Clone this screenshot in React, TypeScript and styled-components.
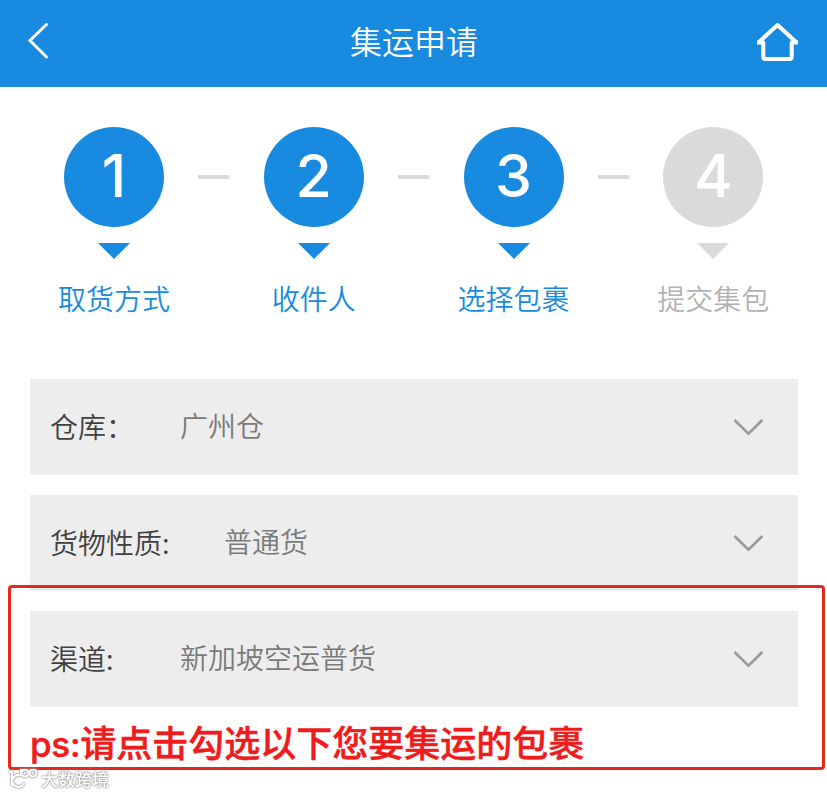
import { Fragment } from 'react';
import styled, { createGlobalStyle } from 'styled-components';

const color = {
  primary: '#188ae0',
  disabled: '#dadada',
  disabledText: '#b2b2b2',
  field: '#ededed',
  label: '#404040',
  value: '#7a7a7a',
  mark: '#e8281e',
  notice: '#ee1c1c',
};

const GlobalStyle = createGlobalStyle`
  * {
    box-sizing: border-box;
  }

  body {
    margin: 0;
    background: #fff;
    font-family: 'Noto Sans CJK SC', sans-serif;
  }
`;

const Page = styled.div`
  position: relative;
  width: 827px;
  height: 794px;
  overflow: hidden;
`;

const Header = styled.header`
  display: flex;
  align-items: center;
  justify-content: space-between;
  height: 87px;
  padding: 0 27px 5px 27px;
  background: ${color.primary};
`;

const HeaderSide = styled.div`
  display: flex;
  width: 44px;

  &:last-child {
    justify-content: flex-end;
  }
`;

const Title = styled.h1`
  margin: 0;
  padding: 0 0 2px 1px;
  color: #fff;
  font-size: 32px;
  font-weight: 350;
  line-height: 44px;
`;

const Steps = styled.div`
  display: flex;
  justify-content: space-between;
  padding: 40px 57.6px 0 58px;
`;

const Step = styled.div<{ $active: boolean }>`
  display: flex;
  flex-direction: column;
  align-items: center;
  width: 112px;
  color: ${({ $active }) => ($active ? color.primary : color.disabled)};
`;

const Circle = styled.div`
  width: 100px;
  height: 100px;
  border-radius: 50%;
  background: currentColor;
  text-align: center;

  > span {
    display: block;
    color: #fff;
    font-family: Inter, sans-serif;
    font-size: 59px;
    font-weight: 550;
    line-height: 98px;
  }
`;

const Arrow = styled.div`
  margin-top: 16px;
  border: 16px solid transparent;
  border-top-color: currentColor;
  border-bottom-width: 0;
`;

const StepLabel = styled.span<{ $active: boolean }>`
  margin-top: 19px;
  color: ${({ $active }) => ($active ? color.primary : color.disabledText)};
  font-size: 28px;
  font-weight: 350;
  line-height: 40px;
  white-space: nowrap;
`;

const Dash = styled.div`
  width: 31px;
  height: 4px;
  margin-top: 48px;
  background: ${color.disabled};
`;

const Form = styled.div`
  display: flex;
  flex-direction: column;
  gap: 20px;
  padding: 61px 29px 0 30px;
`;

const Field = styled.div`
  display: flex;
  align-items: center;
  height: 96px;
  padding: 0 35px 0 20px;
  background: ${color.field};
  font-size: 28px;
  font-weight: 350;
  line-height: 40px;
`;

const FieldLabel = styled.span<{ $width: number }>`
  width: ${({ $width }) => $width}px;
  padding-bottom: 2px;
  color: ${color.label};
`;

const FieldValue = styled.span`
  flex: 1;
  padding-bottom: 5px;
  color: ${color.value};
`;

const Notice = styled.p`
  margin: 0;
  padding: 10px 30px 0;
  color: ${color.notice};
  font-size: 36px;
  font-weight: 500;
  line-height: 48px;
  white-space: nowrap;
  -webkit-text-stroke: 0.5px ${color.notice};

  > span {
    font-family: Inter, sans-serif;
    font-size: 35px;
    letter-spacing: -0.3px;
  }
`;

//빨간 강조 박스
const Highlight = styled.div`
  position: absolute;
  top: 585px;
  left: 8px;
  width: 817px;
  height: 185px;
  border: 3px solid ${color.mark};
  border-radius: 4px;
`;

const Watermark = styled.div`
  position: absolute;
  top: 769px;
  left: 8px;
  display: flex;
  align-items: center;
  gap: 3px;
  color: #fff;
  font-size: 17px;
  font-weight: 500;
  line-height: 18px;
  filter: drop-shadow(0 0 1px #999) drop-shadow(0 0 0.5px #aaa);
`;

const STEPS = [
  { label: '取货方式', active: true },
  { label: '收件人', active: true },
  { label: '选择包裹', active: true },
  { label: '提交集包', active: false },
];

const FIELDS = [
  { label: '仓库：', value: '广州仓', labelWidth: 130 },
  { label: '货物性质:', value: '普通货', labelWidth: 174 },
  { label: '渠道:', value: '新加坡空运普货', labelWidth: 130 },
];

const BackIcon = () => (
  <svg width="24" height="38" viewBox="0 0 24 38" fill="none" stroke="#fff" strokeWidth="3" strokeLinecap="round">
    <path d="M19.5 2.5 3 18.5l16.5 16.5" />
  </svg>
);

const HomeIcon = () => (
  <svg width="44" height="42" viewBox="0 0 44 42" fill="none" stroke="#fff" strokeWidth="4" strokeLinejoin="round">
    <path d="M1 22.5h6.3v14.8a1.8 1.8 0 0 0 1.8 1.8h24.8a1.8 1.8 0 0 0 1.8-1.8V22.5H42M2.5 22.5 21.5 5l19 17.5" />
  </svg>
);

const ChevronIcon = () => (
  <svg width="30" height="18" viewBox="0 0 30 18" fill="none" stroke="#999" strokeWidth="2.6">
    <path d="M1.5 2 15.5 15.6 29.3 2" />
  </svg>
);

const WatermarkLogo = () => (
  <svg width="30" height="20" viewBox="0 0 30 20" fill="none" stroke="#fff" strokeWidth="2">
    <path d="M1 3h3v14M13 6.5A6 6 0 1 0 16 14M13 0v6" />
    <circle cx="17" cy="4" r="3.5" />
    <circle cx="25" cy="4" r="3.5" />
  </svg>
);

export default function App() {
  return (
    <Page>
      <GlobalStyle />
      <Header>
        <HeaderSide>
          <BackIcon />
        </HeaderSide>
        <Title>集运申请</Title>
        <HeaderSide>
          <HomeIcon />
        </HeaderSide>
      </Header>
      <Steps>
        {STEPS.map(({ label, active }, idx) => (
          <Fragment key={label}>
            {idx > 0 && <Dash />}
            <Step $active={active}>
              <Circle>
                <span>{idx + 1}</span>
              </Circle>
              <Arrow />
              <StepLabel $active={active}>{label}</StepLabel>
            </Step>
          </Fragment>
        ))}
      </Steps>
      <Form>
        {FIELDS.map(({ label, value, labelWidth }) => (
          <Field key={label}>
            <FieldLabel $width={labelWidth}>{label}</FieldLabel>
            <FieldValue>{value}</FieldValue>
            <ChevronIcon />
          </Field>
        ))}
      </Form>
      <Notice>
        <span>ps:</span>请点击勾选以下您要集运的包裹
      </Notice>
      <Highlight />
      <Watermark>
        <WatermarkLogo />
        <span>大数跨境</span>
      </Watermark>
    </Page>
  );
}
